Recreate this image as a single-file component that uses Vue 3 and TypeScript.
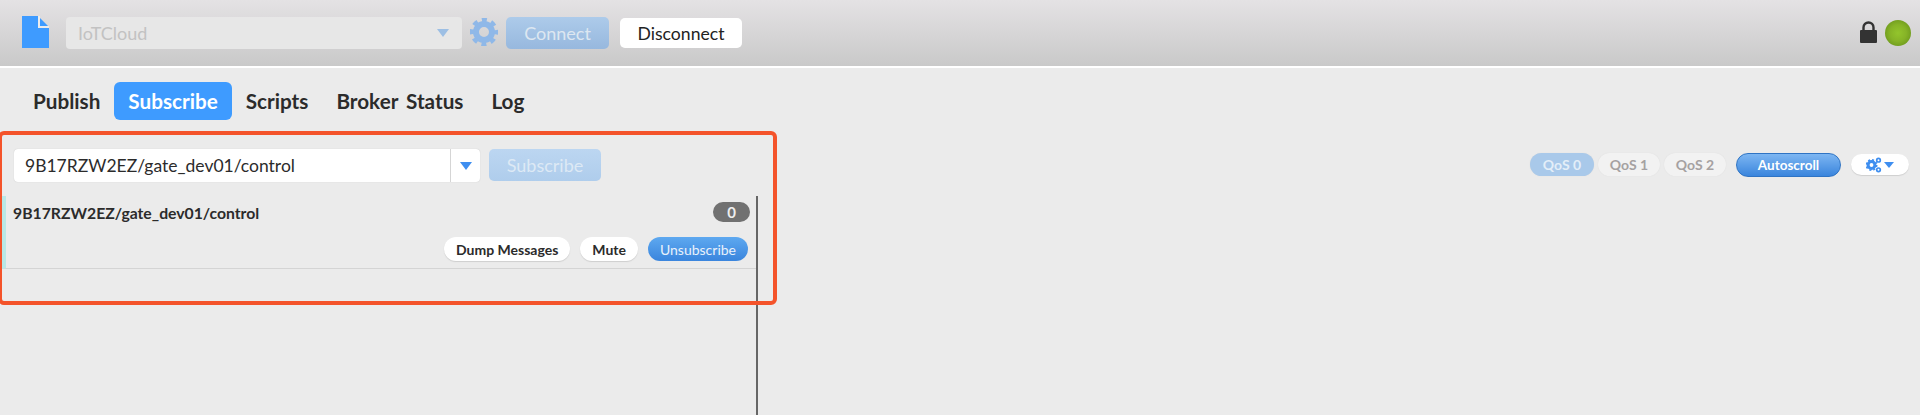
<script setup lang="ts">
const tabs: string[] = ['Publish', 'Subscribe', 'Scripts', 'Broker Status', 'Log']
const topic = '9B17RZW2EZ/gate_dev01/control'
</script>

<template>
  <div class="page">
    <header class="header">
      <svg class="doc" width="27" height="32" viewBox="0 0 27 32">
        <path d="M0 0H16V12H27V32H0Z" fill="#3e9bff" />
        <path d="M16 0H18V10H27V12H16Z" fill="#ececec" />
        <path d="M18 2L26 10H18Z" fill="#3e9bff" />
      </svg>
      <div class="profile">
        <span>IoTCloud</span>
        <i class="caret caret-dim"></i>
      </div>
      <svg class="gear" width="28" height="28" viewBox="-14 -14 28 28">
        <circle r="8" fill="none" stroke="#8fb8e8" stroke-width="6" />
        <circle r="12" fill="none" stroke="#8fb8e8" stroke-width="4.4" stroke-dasharray="4.9 4.52" stroke-dashoffset="2.45" />
      </svg>
      <button class="connect">Connect</button>
      <button class="disconnect">Disconnect</button>
      <div class="status">
        <svg width="17" height="22" viewBox="0 0 17 22">
          <path d="M3.5 10V6.5a5 5 0 0 1 10 0V10" fill="none" stroke="#333" stroke-width="2.4" />
          <rect x="0" y="9" width="17" height="13" rx="1" fill="#333" />
        </svg>
        <span class="led"></span>
      </div>
    </header>

    <nav class="tabs">
      <a v-for="tab in tabs" :key="tab" class="tab" :class="{ active: tab === 'Subscribe' }">{{ tab }}</a>
    </nav>

    <main class="main">
      <section class="left">
        <div class="toolbar">
          <div class="combo">
            <span class="combo-text">{{ topic }}</span>
            <span class="combo-arrow"><i class="caret"></i></span>
          </div>
          <button class="subscribe">Subscribe</button>
        </div>
        <div class="panel">
          <div class="sub">
            <div class="sub-top">
              <strong>{{ topic }}</strong>
              <span class="badge">0</span>
            </div>
            <div class="sub-actions">
              <button class="pill white">Dump Messages</button>
              <button class="pill white">Mute</button>
              <button class="pill blue">Unsubscribe</button>
            </div>
          </div>
        </div>
      </section>

      <section class="right">
        <button class="qos on">QoS 0</button>
        <button class="qos">QoS 1</button>
        <button class="qos">QoS 2</button>
        <button class="auto">Autoscroll</button>
        <button class="opts">
          <svg width="16" height="16" viewBox="0 0 16 16">
            <circle cx="5.5" cy="8" r="3.4" fill="none" stroke="#3e8ef0" stroke-width="3" />
            <circle cx="5.5" cy="8" r="5.2" fill="none" stroke="#3e8ef0" stroke-width="1.6" stroke-dasharray="2 2.08" />
            <circle cx="12.5" cy="3.2" r="1.8" fill="none" stroke="#3e8ef0" stroke-width="1.7" />
            <circle cx="12.5" cy="12.8" r="1.8" fill="none" stroke="#3e8ef0" stroke-width="1.7" />
          </svg>
          <i class="caret"></i>
        </button>
      </section>

      <div class="highlight"></div>
    </main>
  </div>
</template>

<style>
html, body { margin: 0; background: #ebebeb; }
</style>

<style scoped>
.page {
  height: 415px;
  overflow: hidden;
  background: #ebebeb;
  font-family: Lato, "Open Sans", sans-serif;
  color: #2b2b2b;
}
button {
  font-family: inherit;
  border: 0;
  padding: 0;
  margin: 0;
}
.header {
  box-sizing: border-box;
  height: 68px;
  border-bottom: 2px solid #fff;
  background: linear-gradient(#e4e2e4, #c9c9c9);
  display: flex;
  align-items: flex-start;
  padding: 16px 9px 0 22px;
}
.doc { flex: none; margin-right: 17px; }
.profile {
  box-sizing: border-box;
  width: 396px;
  height: 32px;
  margin-top: 1px;
  border-radius: 4px;
  background: #e7e7e7;
  color: #c2c2c2;
  font-size: 18px;
  line-height: 32px;
  padding: 0 13px 0 12px;
  display: flex;
  justify-content: space-between;
  align-items: center;
}
.caret {
  display: inline-block;
  width: 0;
  height: 0;
  border-left: 6.5px solid transparent;
  border-right: 6.5px solid transparent;
  border-top: 8px solid #3e8ef0;
}
.caret-dim { border-top-color: #9dbfe4; }
.gear { flex: none; margin: 2px 8px 0 8px; }
.connect {
  width: 103px;
  height: 32px;
  margin-top: 1px;
  border-radius: 5px;
  background: linear-gradient(#adcbea, #97b8de);
  color: #dde7f1;
  font-size: 18px;
}
.disconnect {
  width: 122px;
  height: 30px;
  margin: 2px 0 0 11px;
  border-radius: 5px;
  background: #fff;
  color: #222;
  font-size: 17.6px;
}
.status {
  margin-left: auto;
  display: flex;
  align-items: flex-start;
  gap: 8px;
  padding-top: 4px;
}
.status svg { margin-top: 1px; }
.led {
  width: 26px;
  height: 26px;
  border-radius: 50%;
  background: radial-gradient(circle at 50% 50%, #93c52c 0%, #86b327 45%, #5f8a18 100%);
}
.tabs {
  display: flex;
  align-items: center;
  padding: 14px 0 0 19px;
}
.tab {
  box-sizing: border-box;
  height: 38px;
  line-height: 38px;
  padding: 0 14px;
  font-size: 20.7px;
  word-spacing: 3px;
  font-weight: 700;
  border-radius: 6px;
}
.tab.active {
  background: #3e9bff;
  color: #fff;
}
.main {
  position: relative;
  display: flex;
  justify-content: space-between;
}
.left {
  box-sizing: border-box;
  width: 758px;
  padding-top: 29px;
}
.toolbar {
  display: flex;
  padding-left: 14px;
  gap: 9px;
}
.combo {
  box-sizing: border-box;
  width: 466px;
  height: 33px;
  background: #fff;
  border-radius: 4px;
  box-shadow: 0 0 1px #bdbdbd;
  display: flex;
  align-items: center;
  justify-content: space-between;
}
.combo-text {
  padding-left: 11px;
  font-size: 17.5px;
  color: #2b2b2b;
}
.combo-arrow {
  box-sizing: border-box;
  width: 30px;
  height: 33px;
  border-left: 1px solid #d5d5d5;
  display: flex;
  align-items: center;
  justify-content: center;
}
.subscribe {
  width: 112px;
  height: 32px;
  border-radius: 5px;
  background: linear-gradient(#bcd6f1, #afcdec);
  color: #dde9f5;
  font-size: 18px;
}
.panel {
  margin-top: 14px;
  border-right: 2px solid #666;
  height: 219px;
  padding-left: 2px;
}
.sub {
  box-sizing: border-box;
  height: 73px;
  border-left: 4px solid #b9e8e6;
  border-bottom: 1px solid #d4d4d4;
  padding: 6px 6px 0 7px;
}
.sub-top {
  display: flex;
  justify-content: space-between;
  align-items: center;
  height: 20px;
}
.sub-top strong {
  font-size: 15.75px;
  font-weight: 700;
}
.badge {
  width: 37px;
  height: 20px;
  border-radius: 10px;
  background: #717171;
  color: #eee;
  font-size: 15px;
  font-weight: 700;
  line-height: 20px;
  text-align: center;
}
.sub-actions {
  display: flex;
  justify-content: flex-end;
  align-items: center;
  gap: 10px;
  margin-top: 15px;
  padding-right: 2px;
}
.pill {
  height: 24px;
  border-radius: 12px;
  font-size: 14px;
  font-weight: 700;
}
.pill.white {
  background: #fff;
  color: #2b2b2b;
  box-shadow: 0 1px 1px #cfcfcf;
  padding: 0 12px;
}
.pill.blue {
  background: linear-gradient(#5ea9f0, #3a85dd);
  color: #e8f1fb;
  font-weight: 400;
  padding: 0 12px;
}
.right {
  display: flex;
  align-items: flex-start;
  padding: 33px 11px 0 0;
}
.qos {
  width: 62px;
  height: 23px;
  margin-right: 4px;
  border-radius: 12px;
  background: #f2f2f2;
  color: #a5a1a1;
  box-shadow: 0 0 1px #d8d8d8;
  font-size: 14px;
  font-weight: 700;
}
.qos.on {
  width: 64px;
  background: #a9c9ea;
  color: #e3eef8;
}
.auto {
  width: 105px;
  height: 24px;
  margin-left: 6px;
  border-radius: 12px;
  background: linear-gradient(#7db6f2, #3a85dd);
  border: 1px solid #2f74c4;
  box-sizing: border-box;
  color: #fff;
  font-size: 13.5px;
  font-weight: 700;
}
.opts {
  width: 58px;
  height: 21px;
  margin: 1px 0 0 10px;
  border-radius: 11px;
  background: #fff;
  box-shadow: 0 1px 1px #cfcfcf;
  display: flex;
  align-items: center;
  justify-content: center;
  gap: 2px;
}
.opts .caret {
  border-left-width: 5.5px;
  border-right-width: 5.5px;
  border-top-width: 6px;
}
.highlight {
  position: absolute;
  left: -2px;
  top: 11px;
  width: 771px;
  height: 166px;
  border: 4px solid #f4532a;
  border-radius: 6px;
  pointer-events: none;
}
</style>
